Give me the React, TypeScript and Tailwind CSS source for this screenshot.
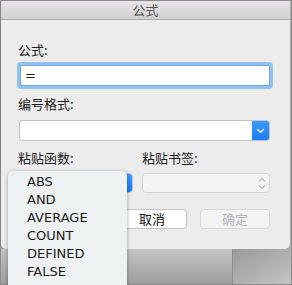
import React from "react";

const cjk = { fontFamily: '"Noto Sans CJK SC", "Noto Sans", sans-serif' };
const latin = { fontFamily: '"DejaVu Sans", "Noto Sans CJK SC", sans-serif' };

function Chevron() {
  return (
    <svg width="9" height="6" viewBox="0 0 9 6">
      <path d="M1.5 1.5 L4.5 4.3 L7.5 1.5" stroke="white" strokeWidth="1.4" fill="none" strokeLinecap="round" strokeLinejoin="round" />
    </svg>
  );
}

function UpDown() {
  return (
    <svg width="8" height="13" viewBox="0 0 8 13">
      <path d="M1 4.5 L4 1.5 L7 4.5" stroke="#8a8a8a" strokeWidth="1" fill="none" />
      <path d="M1 8.5 L4 11.5 L7 8.5" stroke="#8a8a8a" strokeWidth="1" fill="none" />
    </svg>
  );
}

export default function App() {
  const items = ["ABS", "AND", "AVERAGE", "COUNT", "DEFINED", "FALSE"];
  return (
    <div className="w-[292px] h-[285px] overflow-hidden relative bg-[#8c8c8c] p-px">
      <div className="w-full h-full flex flex-col bg-[#b8b8b8]">
        {/* dialog */}
        <div className="h-[248px] w-[289px] bg-[#ececec] rounded-b-[5px] flex flex-col shadow-[0_1px_2px_rgba(0,0,0,0.25)]">
          <div
            className="h-[19px] border-b border-[#a9a9a9] bg-gradient-to-b from-[#e6e4e6] to-[#d2d1d2] flex items-center justify-center text-[13px] leading-[16px] text-[#555555]"
            style={cjk}
          >
            公式
          </div>
          <div className="pl-[16px] flex flex-col text-[13px] text-[#1c1c1c]" style={cjk}>
            <div className="mt-[22px] h-[16px] leading-[16px] ml-[1px]">公式:</div>
            <div className="mt-[4px] w-[256px] h-[27px] rounded-[4px] bg-[#92c2ee] p-[3px]">
              <div className="w-full h-full bg-white border border-[#72a6da] flex items-center pl-[4px] text-[13px] leading-[16px]" style={latin}>
                =
              </div>
            </div>
            <div className="mt-[7px] h-[16px] leading-[16px] ml-[1px]">编号格式:</div>
            <div className="mt-[8px] ml-[2px] w-[251px] h-[21px] flex rounded-[3px] border border-[#c3c3c3] bg-white overflow-hidden">
              <div className="flex-1" />
              <div className="w-[17px] h-full bg-gradient-to-b from-[#3d9bff] to-[#1a7cf7] flex items-center justify-center">
                <Chevron />
              </div>
            </div>
            <div className="mt-[9px] h-[16px] leading-[16px] flex">
              <div className="ml-[1px] w-[124px]">粘贴函数:</div>
              <div>粘贴书签:</div>
            </div>
            <div className="mt-[7px] h-[20px] flex">
              <div className="ml-[2px] w-[114px] h-full flex rounded-[4px] bg-white border border-[#c3c3c3] overflow-hidden">
                <div className="flex-1" />
                <div className="w-[16px] h-full bg-gradient-to-b from-[#3d9bff] to-[#1a7cf7]" />
              </div>
              <div className="ml-[9px] w-[128px] h-full rounded-[4px] bg-[#f4f4f4] border border-[#d4d4d4] flex items-center justify-end pr-[3px]">
                <UpDown />
              </div>
            </div>
            <div className="mt-[16px] h-[20px] flex">
              <div className="ml-[100px] w-[70px] h-full rounded-[4px] bg-white border border-[#c2c2c2] flex items-center justify-center text-[13px] text-[#111]">
                取消
              </div>
              <div className="ml-[13px] w-[70px] h-full rounded-[4px] bg-[#f3f3f3] border border-[#d6d6d6] flex items-center justify-center text-[13px] text-[#b4b4b4]">
                确定
              </div>
            </div>
          </div>
        </div>
        {/* backdrop below */}
        <div className="flex-1 flex">
          <div className="w-[231px] bg-gradient-to-b from-[#c4c4c4] to-[#9e9e9e]" />
          <div className="w-px bg-[#8e8e8e]" />
          <div className="flex-1 bg-gradient-to-br from-[#9a9a9a] to-[#c4c4c4]" />
        </div>
      </div>
      {/* dropdown list */}
      <div
        className="absolute left-[8px] top-[171px] w-[119px] h-[130px] rounded-[5px] bg-[#eef1f1] shadow-[0_1px_4px_rgba(0,0,0,0.35)] pt-[2px] flex flex-col"
        style={latin}
      >
        {items.map((t) => (
          <div key={t} className="h-[18px] leading-[18px] pl-[19px] text-[13px] text-[#1a1a1a]">
            {t}
          </div>
        ))}
      </div>
    </div>
  );
}
